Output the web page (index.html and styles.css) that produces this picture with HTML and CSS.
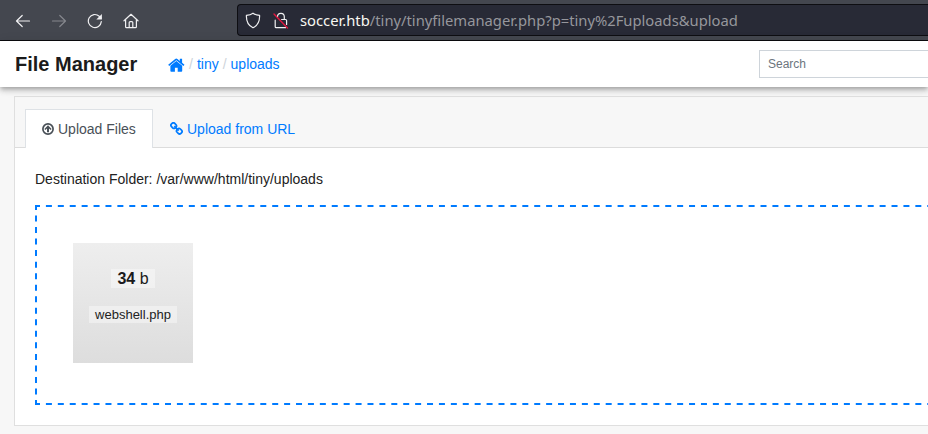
FILE: index.html
```html
<!DOCTYPE html>
<html lang="en">
<head>
<meta charset="utf-8">
<title>File Manager</title>
<link rel="stylesheet" href="styles.css">
</head>
<body>
<header class="browser">
  <div class="controls">
    <svg width="16" height="16" viewBox="0 0 16 16"><path d="M14.5 8H2M7.2 2.5L1.5 8l5.7 5.5"/></svg>
    <svg class="disabled" width="16" height="16" viewBox="0 0 16 16"><path d="M1.5 8H14M8.8 2.5L14.5 8l-5.7 5.5"/></svg>
    <svg width="16" height="16" viewBox="0 0 16 16"><path d="M14.3 8.6A6.5 6.5 0 1 1 12.2 3.2L14 5"/><path class="solid" d="M14.9 1v5.6H9.3z"/></svg>
    <svg width="16" height="16" viewBox="0 0 16 16"><path d="M1 7.8L8 1.3l7 6.5M2.6 6.5v7.3q0 .9.9.9h9q.9 0 .9-.9V6.5M6.2 14.5V9.6q0-1 1-1h1.6q1 0 1 1v4.9"/></svg>
  </div>
  <div class="address">
    <svg width="16" height="17" viewBox="0 0 16 17"><path d="M8 1.2C6.2 2.5 3.8 3.2 1.4 3.4 1.2 8.8 2.7 13.3 8 15.8c5.3-2.5 6.8-7 6.6-12.4C12.2 3.2 9.8 2.5 8 1.2z"/></svg>
    <svg class="lock" width="16" height="17" viewBox="0 0 16 17"><path d="M4.5 4.9a3.4 3.4 0 0 1 6.8-.3v2.9M8.6 7.5h4q1 0 1 1v4M2.2 8.2v6.5q0 1 1 1h9.4"/><path class="strike" d="M1 2l13.5 14"/></svg>
    <span class="url"><b>soccer.htb</b>/tiny/tinyfilemanager.php?p=tiny%2Fuploads&amp;upload</span>
  </div>
</header>
<nav class="navbar">
  <span class="brand">File Manager</span>
  <div class="crumbs">
    <svg width="17" height="14" viewBox="0 0 17 14"><path d="M8.3 2.9L2.4 7.8V13q0 .8.8.8h3.7V9.7h2.8v4.1h3.7q.8 0 .8-.8V7.8z"/><path d="M16.5 6.7L14.1 4.8V.7h-2.3v2.2L9.4 1q-1.1-.9-2.2 0L.2 6.7l1 1.2 7.1-5.7 7.1 5.7z"/></svg>
    <i>/</i><a>tiny</a><i>/</i><a>uploads</a>
  </div>
  <div class="search">Search</div>
</nav>
<main class="card">
  <div class="tabs">
    <div class="tab active"><svg width="12" height="12" viewBox="0 0 12 12"><circle cx="6" cy="6" r="5.1"/><path class="fill" d="M6 2.2L9.6 5.9l-1 1L7 5.4v3.8H5V5.4L3.4 6.9l-1-1z"/></svg>Upload Files</div>
    <div class="tab link"><svg width="13" height="13" viewBox="0 0 13 13"><rect x="-2.7" y="-2.3" width="5.4" height="4.6" rx="1.9" transform="translate(3.7 3.6) rotate(45)"/><rect x="-2.7" y="-2.3" width="5.4" height="4.6" rx="1.9" transform="translate(9.3 9.2) rotate(45)"/><path d="M4.3 4.2l4.4 4.4"/></svg>Upload from URL</div>
  </div>
  <div class="body">
    <p>Destination Folder: /var/www/html/tiny/uploads</p>
    <div class="dropzone">
      <svg class="outline" width="894" height="200"><path stroke-dasharray="6 5.91" stroke-dashoffset="1" d="M0 1H894"/><path stroke-dasharray="6 5.91" stroke-dashoffset="1" d="M0 199H894"/><path stroke-dasharray="6 5.53" stroke-dashoffset="1" d="M1 0V200"/></svg>
      <div class="preview">
        <div class="size"><span><b>34</b> b</span></div>
        <div class="name"><span>webshell.php</span></div>
      </div>
    </div>
  </div>
</main>
</body>
</html>
```
FILE: styles.css
```css
* { box-sizing: border-box; }
body {
  margin: 0;
  height: 434px;
  overflow: hidden;
  background: #f7f7f7;
  color: #222;
  font: 14px/21px "Liberation Sans", Arial, sans-serif;
}
svg { flex: none; fill: none; }
.browser {
  display: flex;
  height: 41px;
  padding-top: 4px;
  background: #44474f;
  border-bottom: 1px solid #0c0c0f;
}
.controls {
  display: flex;
  gap: 20px;
  width: 237px;
  padding: 9px 0 0 15px;
}
.controls svg, .address svg { stroke: #f0f0f2; stroke-width: 1.2; stroke-linecap: round; stroke-linejoin: round; }
.controls .disabled { stroke: #85878d; }
.controls .solid { fill: #f0f0f2; stroke: none; }
.address {
  display: flex;
  align-items: center;
  flex: 1;
  height: 32px;
  padding-left: 7px;
  border: 1px solid #0e0e12;
  border-right: 0;
  border-radius: 4px 0 0 4px;
  background: #282a36;
}
.address .lock { margin: 0 11px 0 12px; }
.address .strike { stroke: #e2163f; stroke-width: 1.4; }
.url {
  color: #96979c;
  font: 14.78px/20px "Noto Sans", sans-serif;
  white-space: nowrap;
}
.url b { color: #f8f8f2; font-weight: 400; }
.navbar {
  position: relative;
  display: flex;
  align-items: center;
  height: 46px;
  padding-left: 15px;
  background: #fff;
  box-shadow: 0 4px 5px 0 rgba(0,0,0,.14), 0 1px 10px 0 rgba(0,0,0,.12), 0 2px 4px -1px rgba(0,0,0,.2);
}
.brand { width: 153px; color: #1b1b1b; font-size: 20px; font-weight: 700; }
.crumbs { display: flex; align-items: center; flex: 1; color: #007bff; }
.crumbs svg { fill: #007bff; margin-top: 2px; }
.crumbs i { margin: 0 4px; color: #ced4da; font-style: normal; }
.search {
  width: 169px;
  height: 28px;
  padding-left: 8px;
  border: 1px solid #ced4da;
  border-right: 0;
  color: #6c757d;
  font-size: 12px;
  line-height: 26px;
}
.card {
  width: 940px;
  height: 330px;
  margin: 9px 0 0 14px;
  border: 1px solid #dfdfdf;
  background: #fff;
}
.tabs {
  display: flex;
  height: 51px;
  padding: 12px 10px 0;
  background: #f7f7f7;
  border-bottom: 1px solid #dcdcdc;
}
.tab {
  display: flex;
  align-items: center;
  gap: 4px;
  height: 39px;
  padding: 0 16px;
  border: 1px solid transparent;
  border-bottom: 0;
  color: #007bff;
}
.tab svg { stroke: currentColor; stroke-width: 1.7; }
.tab.link svg { margin-top: -2px; }
.tab .fill { fill: currentColor; stroke: none; }
.tab.active { width: 128px; background: #fff; border-color: #dee2e6; color: #495057; }
.body { padding: 21px 20px 20px; }
.body p { margin: 0 0 15px; }
.dropzone { position: relative; height: 200px; padding: 38px; }
.outline { position: absolute; inset: 0; stroke: #007bff; stroke-width: 2; }
.preview {
  width: 120px;
  height: 120px;
  padding-top: 24px;
  background: linear-gradient(#eee, #ddd);
  text-align: center;
}
.preview span { display: inline-block; background: rgba(255,255,255,.4); }
.size { height: 37px; font-size: 16px; color: #1a1a1a; }
.size span { padding: 0 6px; line-height: 19px; margin-top: 2px; }
.name { font-size: 13px; color: #222; }
.name span { padding: 0 6px; line-height: 17px; }
```
